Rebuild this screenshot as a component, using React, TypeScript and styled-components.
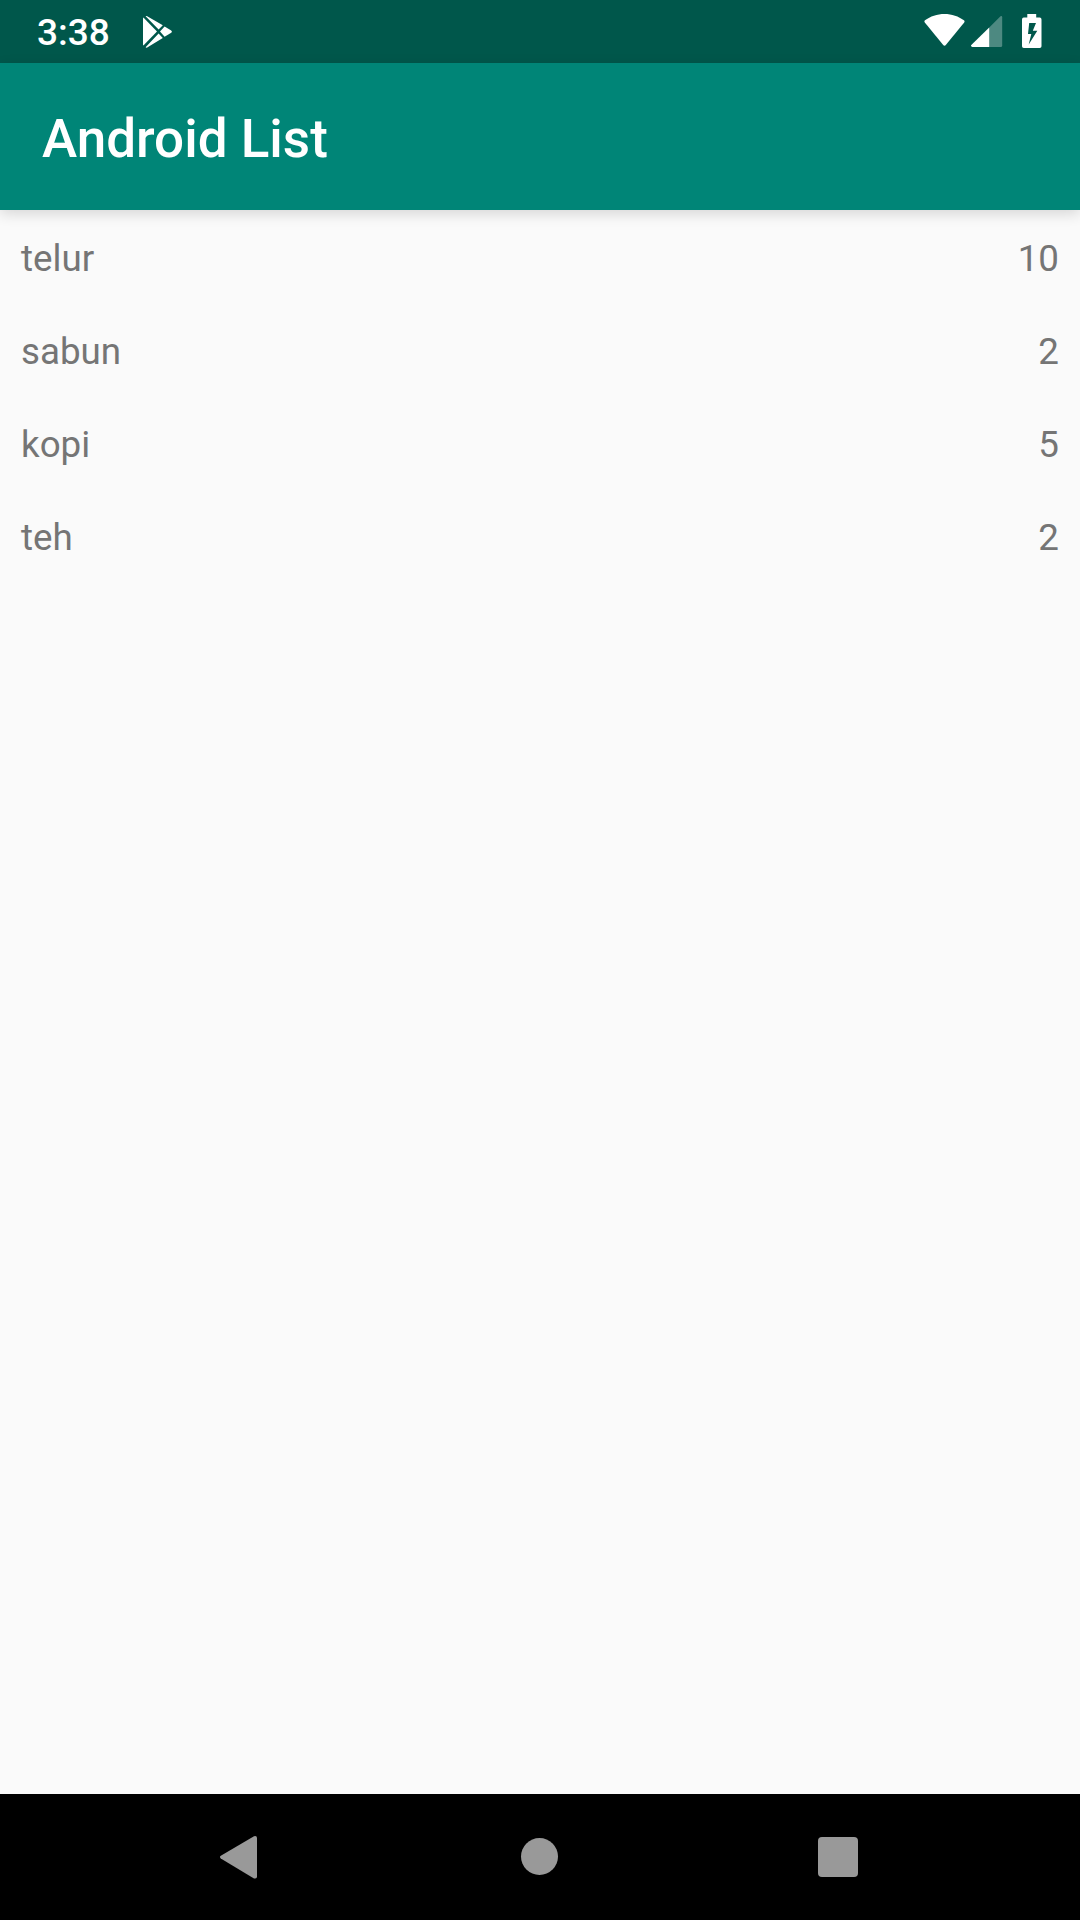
import React from 'react';
import styled, { createGlobalStyle } from 'styled-components';

const GlobalStyle = createGlobalStyle`
  body {
    margin: 0;
    background: #fafafa;
    font-family: Roboto, sans-serif;
  }
`

const Screen = styled.div`
  display: flex;
  flex-direction: column;
  width: 1080px;
  height: 1920px;
  overflow: hidden;
  background: #fafafa;
`

const StatusBar = styled.header`
  display: flex;
  flex: none;
  align-items: flex-start;
  justify-content: space-between;
  box-sizing: border-box;
  height: 63px;
  padding: 0 38px 0 37px;
  background: #00574b;
`

const StatusGroup = styled.div<{ $gap: number }>`
  display: flex;
  gap: ${(props) => props.$gap}px;

  svg {
    display: block;
    fill: white;
  }
`

const StatusSpacer = styled.div`
  width: 9px;
`

const Clock = styled.time`
  width: 74px;
  color: white;
  font-size: 37px;
  font-weight: 500;
  line-height: 66px;
  white-space: nowrap;
`

const AppBar = styled.div`
  z-index: 1;
  flex: none;
  box-sizing: border-box;
  height: 147px;
  padding-left: 42px;
  background: #008577;
  box-shadow: 0 4px 13px rgba(0, 0, 0, 0.14);
`

const Title = styled.h1`
  margin: 0;
  color: white;
  font-size: 53px;
  font-weight: 500;
  line-height: 153px;
`

const List = styled.ul`
  flex: 1;
  margin: 0;
  padding: 0;
  list-style: none;
`

const Row = styled.li`
  display: flex;
  justify-content: space-between;
  box-sizing: border-box;
  height: 93px;
  padding: 2px 21px 0;
  color: #757575;
  font-size: 36.75px;
  line-height: 93px;
`

const NavBar = styled.nav`
  display: flex;
  flex: none;
  align-items: center;
  justify-content: space-between;
  box-sizing: border-box;
  height: 126px;
  padding: 0 206px 0 202px;
  background: black;
`

const NavButton = styled.button`
  width: 74px;
  height: 74px;
  padding: 0;
  border: none;
  background: none;

  svg {
    display: block;
    fill: #999;
  }
`

interface Item {
    name: string
    amount: number
}

const items: Item[] = [
    { name: 'telur', amount: 10 },
    { name: 'sabun', amount: 2 },
    { name: 'kopi', amount: 5 },
    { name: 'teh', amount: 2 },
]

const PlayIcon: React.FC = () => (
    <svg width="30" height="63" viewBox="0 0 30 63">
        <path d="M.4 17.6 14 31.6.4 45.6Q0 45.2 0 44.6V18.6Q0 18 .4 17.6Z"/>
        <path d="M2.6 16.2Q3.4 15.8 4.2 16.3L19.8 25.2 15.6 29.6Z"/>
        <path d="M15.6 33.6 19.8 38 4.2 47.4Q3.4 47.9 2.6 47.3Z"/>
        <path d="M21.6 26.6 28.2 30.4Q29.8 31.6 28.2 32.8L21.6 36.7 17 31.6Z"/>
    </svg>
)

const WifiIcon: React.FC = () => (
    <svg width="42" height="63" viewBox="0 0 42 63">
        <path d="M20.5 14C13.2 14 6.2 16.4 1 20.3Q-.1 21.2 .8 22.5L19 44.8Q20.5 46.5 22 44.8L40.2 22.5Q41 21.2 39.9 20.3C34.6 16.4 27.800 14 20.5 14Z"/>
    </svg>
)

const SignalIcon: React.FC = () => (
    <svg width="32" height="63" viewBox="0 0 32 63">
        <path opacity=".3" d="M29.5 16.3Q31.2 15.5 31.2 17.2V45.5Q31.2 47 29.7 47H18V27.8Z"/>
        <path d="M18.2 27.4V47H1.3Q-.7 46.5 .3 44.9Z"/>
    </svg>
)

const BatteryIcon: React.FC = () => (
    <svg width="20" height="63" viewBox="0 0 20 63">
        <path fillRule="evenodd" d="M5.3 14H14.2V17.6H17.7Q19.5 17.6 19.5 19.4V46.2Q19.5 48 17.7 48H1.8Q0 48 0 46.2V19.4Q0 17.6 1.8 17.6H5.3ZM7.2 23 6 34H9.3L6.7 44.5 15.3 30.7H10.8L14 23Z"/>
    </svg>
)

export default function App() {
    return (
        <Screen>
            <GlobalStyle/>
            <StatusBar>
                <StatusGroup $gap={32}>
                    <Clock>3:38</Clock>
                    <PlayIcon/>
                </StatusGroup>
                <StatusGroup $gap={5}>
                    <WifiIcon/>
                    <SignalIcon/>
                    <StatusSpacer/>
                    <BatteryIcon/>
                </StatusGroup>
            </StatusBar>
            <AppBar>
                <Title>Android List</Title>
            </AppBar>
            <List>
                {items.map((item) => (
                    <Row key={item.name}>
                        <span>{item.name}</span>
                        <span>{item.amount}</span>
                    </Row>
                ))}
            </List>
            <NavBar>
                <NavButton aria-label="Back">
                    <svg width="74" height="74" viewBox="0 0 74 74">
                        <path d="M18.8 35.8Q17.2 37 18.8 38.4L52 58.4Q55 59.3 55 56.5V18Q55 15.5 52 16.2Z"/>
                    </svg>
                </NavButton>
                <NavButton aria-label="Home">
                    <svg width="74" height="74" viewBox="0 0 74 74">
                        <circle cx="38.5" cy="36.5" r="18.5"/>
                    </svg>
                </NavButton>
                <NavButton aria-label="Recents">
                    <svg width="74" height="74" viewBox="0 0 74 74">
                        <rect x="18" y="17" width="40" height="40" rx="4"/>
                    </svg>
                </NavButton>
            </NavBar>
        </Screen>
    )
}
